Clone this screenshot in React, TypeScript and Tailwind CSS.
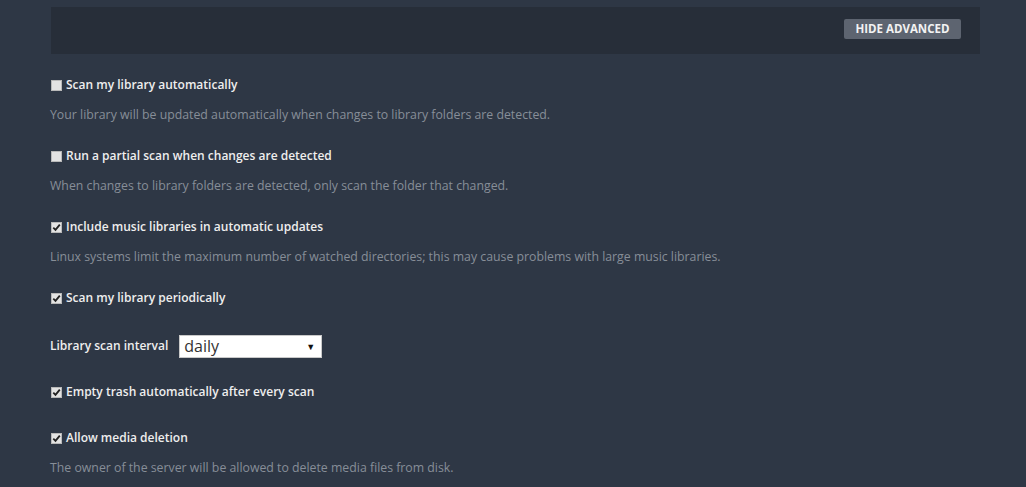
const font = { fontFamily: '"Open Sans", "Noto Sans", sans-serif' };

type Item =
  | { kind: 'check'; label: string; checked: boolean; desc?: string }
  | { kind: 'select'; label: string; value: string };

const items: Item[] = [
  {
    kind: 'check',
    label: 'Scan my library automatically',
    checked: false,
    desc: 'Your library will be updated automatically when changes to library folders are detected.',
  },
  {
    kind: 'check',
    label: 'Run a partial scan when changes are detected',
    checked: false,
    desc: 'When changes to library folders are detected, only scan the folder that changed.',
  },
  {
    kind: 'check',
    label: 'Include music libraries in automatic updates',
    checked: true,
    desc: 'Linux systems limit the maximum number of watched directories; this may cause problems with large music libraries.',
  },
  { kind: 'check', label: 'Scan my library periodically', checked: true },
  { kind: 'select', label: 'Library scan interval', value: 'daily' },
  { kind: 'check', label: 'Empty trash automatically after every scan', checked: true },
  {
    kind: 'check',
    label: 'Allow media deletion',
    checked: true,
    desc: 'The owner of the server will be allowed to delete media files from disk.',
  },
];

function CheckBox({ checked }: { checked: boolean }) {
  return (
    <span className="w-[11px] h-[11px] flex-shrink-0 bg-[#e3e3e3] border border-[#b9b9b9] flex items-center justify-center">
      {checked && (
        <svg width="9" height="9" viewBox="0 0 9 9">
          <path d="M1.3 4.6 L3.5 6.9 L7.8 1.6" fill="none" stroke="#222" strokeWidth="1.8" />
        </svg>
      )}
    </span>
  );
}

export default function App() {
  return (
    <div className="w-[1026px] h-[487px] bg-[#2e3745] overflow-hidden pt-[7px]" style={font}>
      {/* advanced toggle bar */}
      <div className="ml-[51px] w-[929px] h-[47px] bg-[#272e39] flex items-center justify-end pr-[19px] pb-[3px]">
        <button className="h-[20px] w-[117px] rounded-[2px] bg-[#5d6470] text-[#f2f2f2] text-[11.5px] font-bold">
          HIDE ADVANCED
        </button>
      </div>

      <div className="ml-[50px] mt-[21px] flex flex-col">
        {items.map((item, i) => {
          const prev = items[i - 1];
          let mt = 'mt-0';
          if (item.kind === 'select') mt = 'mt-[26px]';
          else if (prev && prev.kind === 'select') mt = 'mt-[24px]';
          else if (prev && prev.kind === 'check' && prev.desc) mt = 'mt-[21px]';
          else if (prev) mt = 'mt-[26px]';

          if (item.kind === 'select') {
            return (
              <div key={i} className={`${mt} h-[24px] flex items-center`}>
                <span className="text-[12px] font-semibold text-[#eeeeee] leading-[20px]">{item.label}</span>
                <div className="ml-[11px] w-[143px] h-[23px] bg-white border border-[#c9c9c9] flex items-center justify-between pl-[4px] pr-[6px]">
                  <span className="text-[16px] text-[#333] leading-[20px]">{item.value}</span>
                  <span className="text-[9px] text-[#111] leading-none">▼</span>
                </div>
              </div>
            );
          }

          return (
            <div key={i} className={mt}>
              <div className="h-[20px] flex items-center gap-[4px] pl-[1px]">
                <CheckBox checked={item.checked} />
                <span className="text-[12px] font-semibold text-[#eeeeee] leading-[20px]">{item.label}</span>
              </div>
              {item.desc && (
                <p className="mt-[10px] h-[20px] text-[12.3px] text-[#878e98] leading-[20px]">{item.desc}</p>
              )}
            </div>
          );
        })}
      </div>
    </div>
  );
}
